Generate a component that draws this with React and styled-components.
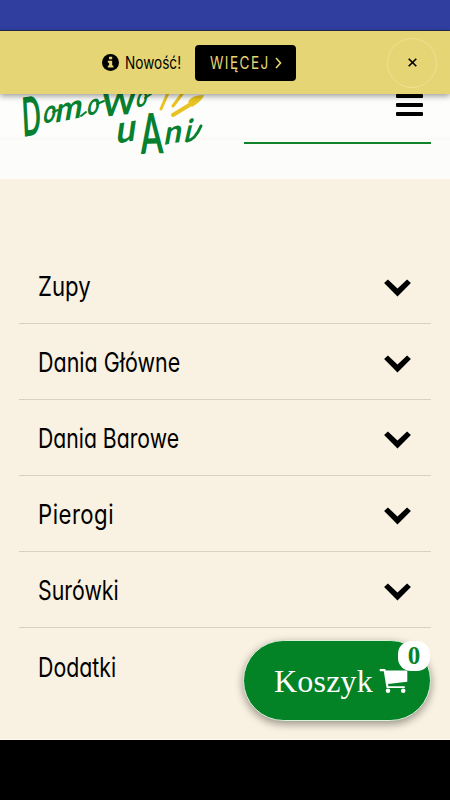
import React, {useState} from 'react';
import styled, {createGlobalStyle} from 'styled-components';

const GlobalStyle = createGlobalStyle`
    * {
        box-sizing: border-box;
    }

    body {
        margin: 0;
        background: #000;
    }

    button {
        font: inherit;
        border: none;
        padding: 0;
        cursor: pointer;
    }
`

const Screen = styled.div`
    position: relative;
    display: flex;
    flex-direction: column;
    width: 450px;
    height: 800px;
    overflow: hidden;
    background: #000;
    color: #000;
    font-family: Inter, 'Open Sans', sans-serif;
    font-feature-settings: 'cv11' 1;
`

const StatusBar = styled.div`
    flex: none;
    height: 31px;
    background: #303f9f;
    border-bottom: 1px solid #252b50;
`

const Banner = styled.div`
    position: relative;
    z-index: 2;
    flex: none;
    display: flex;
    align-items: center;
    justify-content: space-between;
    height: 63px;
    padding: 0 13px 0 102px;
    background: #e5d574;
    box-shadow: 0 2px 6px rgba(0, 0, 0, 0.4);
`

const Notice = styled.div`
    display: flex;
    align-items: center;
    height: 36px;
    font-size: 17px;
`

const NoticeText = styled.span`
    width: 56px;
    margin: 0 14px 0 6px;
    white-space: nowrap;
    transform: scaleX(0.8);
    transform-origin: left;
`

const MoreButton = styled.button`
    display: flex;
    align-items: center;
    justify-content: center;
    width: 101px;
    height: 36px;
    border-radius: 4px;
    background: #000;
    color: #e5d574;
`

const MoreText = styled.span`
    width: 65px;
    font-size: 17px;
    letter-spacing: 1.8px;
    text-align: left;
    transform: scaleX(0.8);
    transform-origin: left;
`

const CloseButton = styled.button`
    display: flex;
    align-items: center;
    justify-content: center;
    width: 50px;
    height: 50px;
    border: 1px solid #f0e294;
    border-radius: 50%;
    background: transparent;
`

const Header = styled.header`
    flex: none;
    display: flex;
    justify-content: space-between;
    height: 85px;
    padding-right: 19px;
    background:
        linear-gradient(#fdfdfb 0 43px, #f9f9f6 44px 45px, #fcfdfa 46px);
`

const HeaderMenu = styled.div`
    display: flex;
    flex-direction: column;
    align-items: flex-end;
    width: 187px;
    height: 50px;
    padding-right: 8px;
    border-bottom: 2px solid #13832a;
`

const MenuButton = styled.button`
    display: flex;
    flex-direction: column;
    gap: 5px;
    width: 27px;
    background: transparent;
`

const MenuBar = styled.span`
    height: 4px;
    border-radius: 1px;
    background: #000;
`

const Main = styled.main`
    flex: none;
    height: 561px;
    padding: 69px 19px 0;
    background: #f9f1e1;
    border-bottom: 1px solid #fffaf0;
`

const Category = styled.div`
    display: flex;
    align-items: center;
    justify-content: space-between;
    height: 76.1px;
    padding: 4px 20px 0 19px;
    border-bottom: 1px solid ${props => props.$last ? 'transparent' : '#d8d0c2'};
    cursor: pointer;
`

const CategoryName = styled.span`
    padding-bottom: 1px;
    font-size: 27px;
    line-height: 40px;
    letter-spacing: ${props => props.$spacing || 0}px;
    white-space: nowrap;
    transform: scaleX(${props => props.$stretch});
    transform-origin: left;
`

const CartButton = styled.button`
    position: absolute;
    right: 19px;
    bottom: 79px;
    z-index: 3;
    display: flex;
    align-items: center;
    width: 188px;
    height: 81px;
    padding: 2px 0 0 30px;
    border: 1px solid #dcefd9;
    border-radius: 41px;
    background: #048226;
    color: #fff;
    font-family: 'Liberation Serif', serif;
    font-size: 32px;
    box-shadow: 0 3px 8px rgba(0, 0, 0, 0.4);
`

const CartLabel = styled.span`
    width: 98px;
    margin-right: 7px;
    text-align: left;
    letter-spacing: 0.2px;
`

const CartCount = styled.span`
    position: absolute;
    top: 0;
    right: 0;
    width: 32px;
    height: 30px;
    border-radius: 13px;
    background: #fff;
    color: #048226;
    font-size: 25px;
    font-weight: bold;
    line-height: 30px;
    text-align: center;
`

const LogoText = styled.text`
    font-family: Lato, sans-serif;
    font-weight: 700;
    fill: #078030;
`

const letters = [
    {char: 'D', x: 23, y: 43, size: 54, turn: -9, squeeze: 0.46, slant: -6},
    {char: 'o', x: 42, y: 30, size: 31, turn: -12, squeeze: 0.72, slant: -22},
    {char: 'm', x: 54, y: 29, size: 33, turn: -12, squeeze: 1, slant: -22},
    {char: 'o', x: 86, y: 22, size: 29, turn: -12, squeeze: 0.75, slant: -22},
    {char: 'W', x: 101, y: 23, size: 33, turn: -6, squeeze: 1, slant: -10},
    {char: 'o', x: 135, y: 14, size: 28, turn: -12, squeeze: 0.72, slant: -22},
    {char: 'u', x: 115, y: 50, size: 38, turn: -10, squeeze: 0.95, slant: -18},
    {char: 'A', x: 141, y: 60, size: 56, turn: -2, squeeze: 0.58, slant: 0},
    {char: 'n', x: 163, y: 51, size: 32, turn: -10, squeeze: 1, slant: -20},
    {char: 'i', x: 183, y: 48, size: 31, turn: -5, squeeze: 0.9, slant: -18},
]

const Logo = () => (
    <svg width="225" height="85" viewBox="0 0 225 85">
        {letters.map((l, i) => (
            <LogoText key={i} fontSize={l.size} transform={`translate(${l.x} ${l.y}) rotate(${l.turn}) skewX(${l.slant}) scale(${l.squeeze} 1)`}>{l.char}</LogoText>
        ))}
        <g fill="none" stroke="#e8c322" strokeLinecap="round">
            <path d="M168 -1L161 15" strokeWidth="3" />
            <path d="M182 0L173 12" strokeWidth="3" />
            <path d="M173 21L196 7" strokeWidth="4" />
        </g>
        <path d="M188 8Q191 1 204 1Q203 6 192 13Z" fill="#e8c322" />
        <g fill="none" stroke="#078030" strokeLinecap="round">
            <path d="M187 47Q195 46 201 32" strokeWidth="3" />
            <path d="M53 18L58 16" strokeWidth="2" />
            <path d="M81 22L86 18" strokeWidth="2" />
            <path d="M97 10L104 7" strokeWidth="2" />
            <path d="M145 4L151 0" strokeWidth="2" />
        </g>
    </svg>
)

const InfoIcon = () => (
    <svg width="17" height="17" viewBox="0 0 17 17">
        <circle cx="8.5" cy="8.5" r="8.5" />
        <path d="M7 2.8h3.2v2.4H7zM5.8 6.8h4.4v4.8h1.2v2H5.8v-2h1.3V8.7H5.8z" fill="#e5d574" />
    </svg>
)

const ChevronDown = () => (
    <svg width="27" height="18" viewBox="0 0 27 18">
        <path d="M3.9 .4L13.5 9.4L23.1 .4L26.9 4.1L13.5 17.4L.1 4.1Z" />
    </svg>
)

const CartIcon = () => (
    <svg width="29" height="25" viewBox="0 0 29 25">
        <g fill="#fff">
            <path d="M1 0H6L7 1.4H28.3V12.7L9 15L9.4 17.2H25.8V19H7.7L7.3 17.7L4.8 2.2H1Q0 1 1 0Z" />
            <circle cx="9" cy="21.7" r="2.3" />
            <circle cx="24.2" cy="21.7" r="2.3" />
        </g>
    </svg>
)

const categories = [
    {name: 'Zupy', stretch: 0.82},
    {name: 'Dania Główne', stretch: 0.795},
    {name: 'Dania Barowe', stretch: 0.785},
    {name: 'Pierogi', stretch: 0.82, spacing: 0.6},
    {name: 'Surówki', stretch: 0.79},
    {name: 'Dodatki', stretch: 0.79},
]

const App = () => {
    const [showBanner, setShowBanner] = useState(true);
    return(
        <>
        <GlobalStyle />
        <Screen>
            <StatusBar />
            {showBanner && <Banner>
                <Notice>
                    <InfoIcon />
                    <NoticeText>Nowość!</NoticeText>
                    <MoreButton>
                        <MoreText>WIĘCEJ</MoreText>
                        <svg width="7" height="12" viewBox="0 0 7 12"><path d="M1 1L5.5 6L1 11" fill="none" stroke="#e5d574" strokeWidth="1.6" /></svg>
                    </MoreButton>
                </Notice>
                <CloseButton onClick={() => setShowBanner(false)}>
                    <svg width="9" height="9" viewBox="0 0 9 9"><path d="M.7 .7L8.3 8.3M8.3 .7L.7 8.3" stroke="#000" strokeWidth="1.6" /></svg>
                </CloseButton>
            </Banner>}
            <Header>
                <Logo />
                <HeaderMenu>
                    <MenuButton>
                        <MenuBar />
                        <MenuBar />
                        <MenuBar />
                    </MenuButton>
                </HeaderMenu>
            </Header>
            <Main>
                {categories.map((c, i) => (
                    <Category key={c.name} $last={i === categories.length - 1}>
                        <CategoryName $stretch={c.stretch} $spacing={c.spacing}>{c.name}</CategoryName>
                        {i < categories.length - 1 && <ChevronDown />}
                    </Category>
                ))}
            </Main>
            <CartButton>
                <CartLabel>Koszyk</CartLabel>
                <CartIcon />
                <CartCount>0</CartCount>
            </CartButton>
        </Screen>
        </>
    )
}

export default App
